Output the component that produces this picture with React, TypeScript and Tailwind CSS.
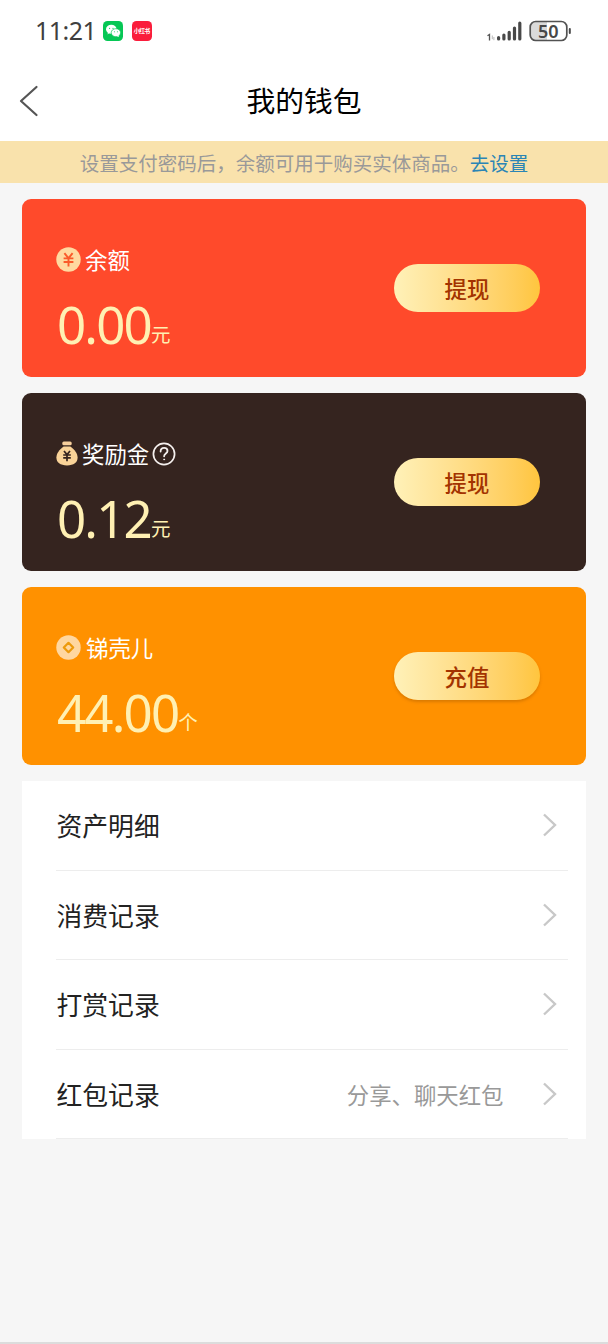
import React from 'react';

interface WalletCardProps {
  label: string;
  amount: string;
  unit: string;
  action: string;
  className: string;
  labelClassName: string;
  buttonClassName?: string;
  icon: React.ReactNode;
  help?: boolean;
}

interface RecordRow {
  title: string;
  hint?: string;
}

const records: RecordRow[] = [
  { title: '资产明细' },
  { title: '消费记录' },
  { title: '打赏记录' },
  { title: '红包记录', hint: '分享、聊天红包' },
];

const YuanIcon = () => (
  <svg className="h-[25px] w-[25px]" viewBox="0 0 25 25" fill="none">
    <circle cx="12.5" cy="12.5" r="12.2" fill="#ffd9a0" />
    <path d="M8.4 6.2l4.1 5 4.1-5M7.6 11.4h9.800M7.600 15h9.800M12.500 11.200v8.200" stroke="#fa5a2a" strokeWidth="1.9" />
  </svg>
);

const BagIcon = () => (
  <svg className="h-[25px] w-[22px]" viewBox="0 0 22 25" fill="none">
    <rect x="6.3" y="0.6" width="9.4" height="3.6" rx="1.5" fill="#f7cf9c" />
    <path
      d="M7.6 5.4h6.8c4.2 3 7.2 7 7.2 11.2 0 5.2-3.8 7.8-10.6 7.8S.4 21.8.4 16.6C.4 12.4 3.4 8.4 7.6 5.4z"
      fill="#f9d398"
    />
    <path d="M8 10l3 3.600L14 10M7.200 14h7.600M7.200 16.800h7.600M11 13.500v6.800" stroke="#35241f" strokeWidth="1.7" />
  </svg>
);

const CoinIcon = () => (
  <svg className="h-[25px] w-[25px]" viewBox="0 0 25 25" fill="none">
    <circle cx="12.5" cy="12.5" r="12.2" fill="#ffd7a0" />
    <path d="M12.5 7.800l4.700 4.700-4.700 4.700-4.700-4.700z" stroke="#ed9a0c" strokeWidth="2.200" strokeLinejoin="round" />
  </svg>
);

const HelpIcon = () => (
  <svg className="ml-[3px] h-6 w-6" viewBox="0 0 24 24" fill="none" stroke="#f5f0ee" strokeLinecap="round">
    <circle cx="12" cy="12" r="10.6" strokeWidth="1.7" />
    <path d="M8.600 9.500c0-2.300 1.500-3.600 3.500-3.600s3.400 1.300 3.400 3.100c0 2.500-3.400 2.600-3.400 5.300" strokeWidth="1.8" />
    <circle cx="12.1" cy="17.4" r="0.5" strokeWidth="1" />
  </svg>
);

const StatusBar = () => (
  <div className="flex h-[61px] items-center justify-between pr-9 pl-[35px]">
    <div className="flex items-center">
      <span className="w-[60px] font-['Noto_Sans'] text-[25px] leading-none tracking-[-0.5px] whitespace-nowrap text-[#3f3f3f]">
        11:21
      </span>
      <svg className="ml-2 h-5 w-5" viewBox="0 0 20 20">
        <rect width="20" height="20" rx="4.5" fill="#06c755" />
        <path d="M4.5 13.5l.7-3h3z" fill="#fff" />
        <ellipse cx="8.300" cy="8.300" rx="5.300" ry="4.500" fill="#fff" />
        <ellipse cx="12.900" cy="11.700" rx="4.700" ry="4" fill="#fff" stroke="#06c755" strokeWidth="0.7" />
        <path d="M13.5 15l2.400 1-.300-2z" fill="#fff" />
        <g fill="#06c755">
          <circle cx="6.6" cy="7.3" r="0.6" />
          <circle cx="10" cy="7.3" r="0.6" />
          <circle cx="11.4" cy="10.8" r="0.5" />
          <circle cx="14.4" cy="10.8" r="0.5" />
        </g>
      </svg>
      <svg className="ml-[9px] h-5 w-5" viewBox="0 0 20 20">
        <rect width="20" height="20" rx="4.5" fill="#fa1d3c" />
        <text
          x="10"
          y="12.4"
          textAnchor="middle"
          fontSize="6"
          fontWeight="700"
          fill="#fff"
          fontFamily="'Noto Sans CJK SC', sans-serif"
          textLength="16.5"
        >
          小红书
        </text>
      </svg>
    </div>
    <svg className="h-[30px] w-[86px]" viewBox="0 -4 86 30">
      <path d="M1.500 15.800l2-1.300v6" stroke="#555" strokeWidth="1.3" fill="none" />
      <path d="M6.300 15.500v3.700M7.900 17v3.200" stroke="#bbb" strokeWidth="1" />
      <g stroke="#484848" strokeWidth="3.2" strokeLinecap="round">
        <path d="M12.600 17.500v1.500M17.900 15v4M23.200 12.300v6.700M28.500 8v11M33.800 3v16" />
      </g>
      <path d="M49 2h12v18H49a5 5 0 01-5-5V7a5 5 0 015-5z" fill="#dadada" />
      <rect x="44.2" y="1.5" width="36.6" height="19" rx="5.5" fill="none" stroke="#525252" strokeWidth="1.7" />
      <rect x="82.8" y="8" width="2" height="6" rx="1" fill="#484848" />
      <text x="62.3" y="17.5" textAnchor="middle" fontSize="18" fontWeight="600" fill="#484848" fontFamily="'Noto Sans', sans-serif">
        50
      </text>
    </svg>
  </div>
);

const WalletCard: React.FC<WalletCardProps> = ({
  label,
  amount,
  unit,
  action,
  className,
  labelClassName,
  buttonClassName = '',
  icon,
  help,
}) => (
  <section className={`flex h-[178px] justify-between rounded-[9px] pr-[45.5px] pl-[34px] ${className}`}>
    <div className="pt-12">
      <div className="flex h-[25px] items-center">
        {icon}
        <span className={`text-[22.4px] leading-none text-white ${labelClassName}`}>{label}</span>
        {help && <HelpIcon />}
      </div>
      <div className="mt-[25px] ml-px flex items-start leading-none text-[#fff0b3]">
        <span className="font-['Noto_Sans'] text-[51px] leading-[54px] tracking-[-1.8px]">{amount}</span>
        <span className="mt-[27px] text-[19.5px]">{unit}</span>
      </div>
    </div>
    <button
      className={`mt-[65px] h-12 w-[146px] rounded-full bg-linear-to-r from-[#fff1b8] to-[#ffc53d] text-[22.4px] leading-none font-medium text-[#a33300] ${buttonClassName}`}
    >
      {action}
    </button>
  </section>
);

export default function App() {
  return (
    <div className="flex h-[1344px] w-[608px] flex-col overflow-hidden border-b-2 border-[#dcdcdc] bg-[#f6f6f6] font-['Noto_Sans_CJK_SC',sans-serif]">
      <header className="h-[141px] bg-white">
        <StatusBar />
        <div className="grid h-[79px] grid-cols-[60px_1fr_60px] items-center">
          <svg className="ml-[18px] h-8 w-6" viewBox="0 0 24 32" fill="none">
            <path d="M18.5 2L3 16l15.500 14" stroke="#555" strokeWidth="2.2" strokeLinecap="round" strokeLinejoin="round" />
          </svg>
          <h1 className="text-center text-[28.8px] leading-none text-black">我的钱包</h1>
        </div>
      </header>

      <div className="flex h-[42px] items-center justify-center bg-[#f9e2ac] pt-px text-[19.5px] leading-none whitespace-nowrap text-[#999]">
        设置支付密码后，余额可用于购买实体商品。
        <a className="text-[#2b85b5]">去设置</a>
      </div>

      <main className="mr-[22.5px] ml-[22px] mt-4 flex flex-col gap-4">
        <WalletCard
          label="余额"
          amount="0.00"
          unit="元"
          action="提现"
          className="bg-[#ff4a2b]"
          labelClassName="ml-1"
          icon={<YuanIcon />}
        />
        <WalletCard
          label="奖励金"
          amount="0.12"
          unit="元"
          action="提现"
          className="bg-[#35241f]"
          labelClassName="ml-1"
          icon={<BagIcon />}
          help
        />
        <WalletCard
          label="锑壳儿"
          amount="44.00"
          unit="个"
          action="充值"
          className="bg-[#ff9100]"
          labelClassName="ml-[5px]"
          buttonClassName="shadow-[0_2px_3px_rgba(150,80,0,0.35)]"
          icon={<CoinIcon />}
        />

        <ul className="bg-white pr-[17.5px] pl-[33.5px]">
          {records.map((row) => (
            <li key={row.title} className="flex h-[89.5px] items-center border-b border-[#ededed] pr-[11.5px] pl-[1px]">
              <span className="text-[25.8px] leading-none text-[#222]">{row.title}</span>
              {row.hint && <span className="mr-[38px] ml-auto text-[22.4px] leading-none text-[#999]">{row.hint}</span>}
              <svg className={row.hint ? 'h-6 w-[15px]' : 'ml-auto h-6 w-[15px]'} viewBox="0 0 15 24" fill="none">
                <path d="M2 1.5L13 12 2 22.5" stroke="#c8c8c8" strokeWidth="2.4" />
              </svg>
            </li>
          ))}
        </ul>
      </main>
    </div>
  );
}
